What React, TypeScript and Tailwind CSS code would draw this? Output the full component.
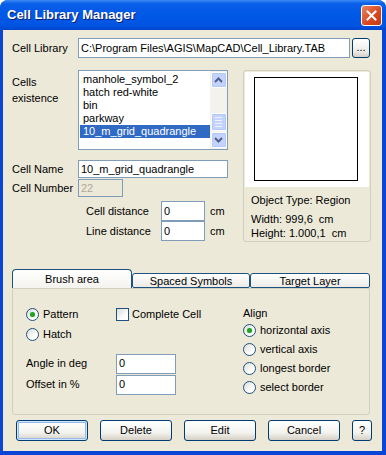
import React from "react";

const inputCls =
  "bg-white border border-[#7F9DB9] px-[2px] flex items-center text-[11px] text-black leading-none whitespace-nowrap overflow-hidden";

const Field = ({ w, h, value, disabled }: { w: string; h: string; value: string; disabled?: boolean }) => (
  <div className={`${inputCls} ${w} ${h} ${disabled ? "!bg-[#ECE9D8] !text-[#ACA899]" : ""}`}>{value}</div>
);

const Radio = ({ checked, label }: { checked?: boolean; label: string }) => (
  <div className="flex items-center gap-[4px] h-[14px]">
    <div className="w-[13px] h-[13px] rounded-full border border-[#1C5180] bg-[linear-gradient(135deg,#DCDCD7,#FFFFFF_70%)] flex items-center justify-center">
      {checked && <div className="w-[5px] h-[5px] rounded-full bg-[#21A121] shadow-[0_0_1px_#7be07b]" />}
    </div>
    <span>{label}</span>
  </div>
);

const Button = ({ label, w, def }: { label: string; w: string; def?: boolean }) => (
  <div
    className={`${w} h-[21px] rounded-[3px] border border-[#003C74] bg-[linear-gradient(to_bottom,#FFFFFF,#F3F3EF_60%,#D6D0C5)] flex items-center justify-center ${
      def ? "shadow-[inset_0_0_0_1px_#CEE7FF,inset_0_0_0_2px_#98B8EA]" : ""
    }`}
  >
    {label}
  </div>
);

const Chevron = ({ up }: { up?: boolean }) => (
  <svg width="9" height="6" viewBox="0 0 9 6">
    <path d={up ? "M1 5 L4.5 1.5 L8 5" : "M1 1 L4.5 4.5 L8 1"} fill="none" stroke="#4D6185" strokeWidth="2" />
  </svg>
);

const ScrollBtn = ({ children, h }: { children?: React.ReactNode; h: string }) => (
  <div className={`w-[16px] ${h} rounded-[2px] border border-white bg-[#C3D3FD] shadow-[inset_0_0_0_1px_#B4C8F6] flex flex-col items-center justify-center gap-[2px]`}>
    {children}
  </div>
);

const items = ["manhole_symbol_2", "hatch red-white", "bin", "parkway", "10_m_grid_quadrangle"];

export default function App() {
  return (
    <div className="w-[386px] h-[455px] rounded-t-[8px] overflow-hidden bg-[#0B45D6] flex flex-col font-['Liberation_Sans',Arial,sans-serif] text-[11px] text-black whitespace-nowrap">
      {/* title bar */}
      <div className="h-[30px] shrink-0 flex items-center justify-between pl-[7px] pr-[4px] bg-[linear-gradient(to_bottom,#3D8BF7_0%,#0A5FE8_12%,#0058E6_50%,#0154E2_85%,#0044CC_100%)]">
        <span className="text-white font-bold text-[13px] [text-shadow:1px_1px_0_#0A1E6E]">Cell Library Manager</span>
        <div className="w-[21px] h-[21px] rounded-[3px] border border-white bg-[linear-gradient(135deg,#E9855F,#D8461F_60%,#C23A16)] flex items-center justify-center">
          <svg width="11" height="11" viewBox="0 0 11 11">
            <path d="M1.5 1.5 L9.5 9.5 M9.5 1.5 L1.5 9.5" stroke="white" strokeWidth="2" strokeLinecap="square" />
          </svg>
        </div>
      </div>

      {/* body */}
      <div className="flex-1 ml-[3px] mr-[4px] mb-[4px] bg-[#ECE9D8] pl-[9px] pt-[8px] flex flex-col">
        <div className="flex items-center">
          <span className="w-[66px]">Cell Library</span>
          <Field w="w-[272px]" h="h-[20px]" value="C:\Program Files\AGIS\MapCAD\Cell_Library.TAB" />
          <div className="ml-[2px] w-[18px] h-[20px] rounded-[3px] border border-[#003C74] bg-[linear-gradient(to_bottom,#FFFFFF,#ECEBE6_70%,#D6D0C5)] flex items-end justify-center pb-[4px] leading-none">
            ...
          </div>
        </div>

        <div className="flex mt-[12px]">
          {/* left column */}
          <div className="w-[216px] flex flex-col">
            <div className="flex">
              <div className="w-[66px] pt-[4px] leading-[16px]">
                Cells
                <br />
                existence
              </div>
              <div className="w-[150px] h-[80px] border border-[#7F9DB9] bg-white flex">
                <div className="flex-1 pt-[2px] pl-[1px]">
                  {items.map((t, i) => (
                    <div
                      key={t}
                      className={`h-[13px] leading-[13px] pl-[3px] ${i === 4 ? "bg-[#316AC5] text-white" : ""}`}
                    >
                      {t}
                    </div>
                  ))}
                </div>
                <div className="w-[17px] bg-[#F3F2EC] flex flex-col items-center justify-between py-[1px]">
                  <ScrollBtn h="h-[16px]">
                    <Chevron up />
                  </ScrollBtn>
                  <div className="flex-1 w-full flex flex-col items-center justify-end pb-[1px]">
                    <ScrollBtn h="h-[18px]">
                      <div className="w-[7px] h-[1px] bg-[#EEF4FE]" />
                      <div className="w-[7px] h-[1px] bg-[#EEF4FE]" />
                      <div className="w-[7px] h-[1px] bg-[#EEF4FE]" />
                      <div className="w-[7px] h-[1px] bg-[#EEF4FE]" />
                    </ScrollBtn>
                  </div>
                  <ScrollBtn h="h-[16px]">
                    <Chevron />
                  </ScrollBtn>
                </div>
              </div>
            </div>

            <div className="flex items-center mt-[10px]">
              <span className="w-[66px]">Cell Name</span>
              <Field w="w-[150px]" h="h-[18px]" value="10_m_grid_quadrangle" />
            </div>
            <div className="flex items-center mt-[1px]">
              <span className="w-[66px]">Cell Number</span>
              <Field w="w-[45px]" h="h-[18px]" value="22" disabled />
            </div>
            <div className="flex items-center mt-[4px] pl-[74px]">
              <span className="w-[75px]">Cell distance</span>
              <Field w="w-[44px]" h="h-[20px]" value="0" />
              <span className="ml-[5px]">cm</span>
            </div>
            <div className="flex items-center pl-[74px]">
              <span className="w-[75px]">Line distance</span>
              <Field w="w-[44px]" h="h-[20px]" value="0" />
              <span className="ml-[5px]">cm</span>
            </div>
          </div>

          {/* preview */}
          <div className="ml-[15px] w-[128px] h-[172px] rounded-[3px] border border-[#D0D0BF] p-[1px] flex flex-col">
            <div className="h-[115px] bg-white pl-[9px] pt-[5px]">
              <div className="w-[104px] h-[104px] border border-black" />
            </div>
            <div className="pl-[6px] pt-[6px] leading-[14px]">
              <div>Object Type: Region</div>
              <div className="mt-[5px]">Width: 999,6 &nbsp;cm</div>
              <div>Height: 1.000,1 &nbsp;cm</div>
            </div>
          </div>
        </div>

        {/* tabs */}
        <div className="flex items-end mt-[27px] w-[358px]">
          <div className="w-[120px] h-[19px] rounded-t-[4px] border border-b-0 border-[#1C5180] bg-[linear-gradient(to_bottom,#FFFFFF,#F4F3EE)] flex items-center justify-center">
            Brush area
          </div>
          <div className="w-[118px] h-[15px] rounded-t-[3px] rounded-b-[2px] border border-[#1C5180] bg-[linear-gradient(to_bottom,#FFFFFF,#ECEBE6)] flex items-center justify-center leading-none pt-[2px]">
            Spaced Symbols
          </div>
          <div className="w-[120px] h-[15px] rounded-t-[3px] rounded-b-[2px] border border-[#1C5180] bg-[linear-gradient(to_bottom,#FFFFFF,#ECEBE6)] flex items-center justify-center leading-none pt-[2px]">
            Target Layer
          </div>
        </div>
        <div className="w-[358px] h-[127px] border border-[#D0D0BF] rounded-b-[3px] pl-[13px] pt-[17px] flex">
          <div className="w-[217px] flex flex-col">
            <div className="flex items-center">
              <div className="w-[90px]">
                <Radio checked label="Pattern" />
              </div>
              <div className="flex items-center gap-[3px]">
                <div className="w-[13px] h-[13px] border border-[#1C5180] bg-[linear-gradient(135deg,#DCDCD7,#FFFFFF_70%)]" />
                <span>Complete Cell</span>
              </div>
            </div>
            <div className="mt-[5px]">
              <Radio label="Hatch" />
            </div>
            <div className="flex items-center mt-[12px]">
              <span className="w-[90px]">Angle in deg</span>
              <Field w="w-[60px]" h="h-[20px]" value="0" />
            </div>
            <div className="flex items-center mt-[1px]">
              <span className="w-[90px]">Offset in %</span>
              <Field w="w-[60px]" h="h-[20px]" value="0" />
            </div>
          </div>
          <div className="flex flex-col">
            <div className="h-[14px] leading-[14px]">Align</div>
            <div className="mt-[3px] flex flex-col gap-[5px]">
              <Radio checked label="horizontal axis" />
              <Radio label="vertical axis" />
              <Radio label="longest border" />
              <Radio label="select border" />
            </div>
          </div>
        </div>

        {/* buttons */}
        <div className="flex items-center gap-[12px] mt-[5px] pl-[4px]">
          <Button label="OK" w="w-[72px]" def />
          <Button label="Delete" w="w-[72px]" />
          <Button label="Edit" w="w-[72px]" />
          <Button label="Cancel" w="w-[72px]" />
          <Button label="?" w="w-[20px]" />
        </div>
      </div>
    </div>
  );
}
